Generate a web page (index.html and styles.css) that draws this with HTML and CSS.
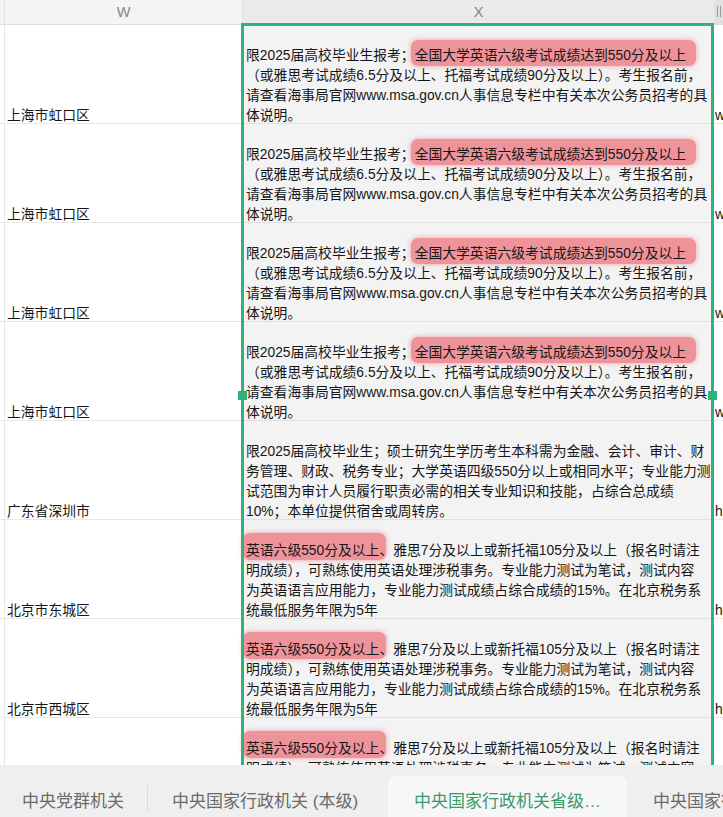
FILE: index.html
```html
<!DOCTYPE html>
<html lang="zh-CN">
<head>
<meta charset="utf-8">
<title>Sheet</title>
<link rel="stylesheet" href="styles.css">
</head>
<body>
<div class="sheet">
  <div class="grid">
    <div class="hd strip"></div>
    <div class="hd w">W</div>
    <div class="hd x">X</div>
    <div class="hd y"><span class="grip"></span></div>

    <div class="c strip"></div>
    <div class="c w"><p class="txt">上海市虹口区</p></div>
    <div class="c x"><p class="txt"><span class="ln">限2025届高校毕业生报考；<mark class="hl">全国大学英语六级考试成绩达到550分及以上</mark></span><span class="ln">（或雅思考试成绩6.5分及以上、托福考试成绩90分及以上）。考生报名前，</span><span class="ln">请查看海事局官网www.msa.gov.cn人事信息专栏中有关本次公务员招考的具</span><span class="ln">体说明。</span></p></div>
    <div class="c y"><p class="txt">www.msa.gov.cn</p></div>

    <div class="c strip"></div>
    <div class="c w"><p class="txt">上海市虹口区</p></div>
    <div class="c x"><p class="txt"><span class="ln">限2025届高校毕业生报考；<mark class="hl">全国大学英语六级考试成绩达到550分及以上</mark></span><span class="ln">（或雅思考试成绩6.5分及以上、托福考试成绩90分及以上）。考生报名前，</span><span class="ln">请查看海事局官网www.msa.gov.cn人事信息专栏中有关本次公务员招考的具</span><span class="ln">体说明。</span></p></div>
    <div class="c y"><p class="txt">www.msa.gov.cn</p></div>

    <div class="c strip"></div>
    <div class="c w"><p class="txt">上海市虹口区</p></div>
    <div class="c x"><p class="txt"><span class="ln">限2025届高校毕业生报考；<mark class="hl">全国大学英语六级考试成绩达到550分及以上</mark></span><span class="ln">（或雅思考试成绩6.5分及以上、托福考试成绩90分及以上）。考生报名前，</span><span class="ln">请查看海事局官网www.msa.gov.cn人事信息专栏中有关本次公务员招考的具</span><span class="ln">体说明。</span></p></div>
    <div class="c y"><p class="txt">www.msa.gov.cn</p></div>

    <div class="c strip"></div>
    <div class="c w"><p class="txt">上海市虹口区</p></div>
    <div class="c x"><p class="txt"><span class="ln">限2025届高校毕业生报考；<mark class="hl">全国大学英语六级考试成绩达到550分及以上</mark></span><span class="ln">（或雅思考试成绩6.5分及以上、托福考试成绩90分及以上）。考生报名前，</span><span class="ln">请查看海事局官网www.msa.gov.cn人事信息专栏中有关本次公务员招考的具</span><span class="ln">体说明。</span></p></div>
    <div class="c y"><p class="txt">www.msa.gov.cn</p></div>

    <div class="c strip"></div>
    <div class="c w"><p class="txt">广东省深圳市</p></div>
    <div class="c x"><p class="txt"><span class="ln">限2025届高校毕业生；硕士研究生学历考生本科需为金融、会计、审计、财</span><span class="ln">务管理、财政、税务专业；大学英语四级550分以上或相同水平；专业能力测</span><span class="ln">试范围为审计人员履行职责必需的相关专业知识和技能，占综合总成绩</span><span class="ln">10%；本单位提供宿舍或周转房。</span></p></div>
    <div class="c y"><p class="txt">http://</p></div>

    <div class="c strip"></div>
    <div class="c w"><p class="txt">北京市东城区</p></div>
    <div class="c x"><p class="txt"><span class="ln"><mark class="hl hl2">英语六级550分及以上</mark>、雅思7分及以上或新托福105分及以上（报名时请注</span><span class="ln">明成绩），可熟练使用英语处理涉税事务。专业能力测试为笔试，测试内容</span><span class="ln">为英语语言应用能力，专业能力测试成绩占综合成绩的15%。在北京税务系</span><span class="ln">统最低服务年限为5年</span></p></div>
    <div class="c y"><p class="txt">http://</p></div>

    <div class="c strip"></div>
    <div class="c w"><p class="txt">北京市西城区</p></div>
    <div class="c x"><p class="txt"><span class="ln"><mark class="hl hl2">英语六级550分及以上</mark>、雅思7分及以上或新托福105分及以上（报名时请注</span><span class="ln">明成绩），可熟练使用英语处理涉税事务。专业能力测试为笔试，测试内容</span><span class="ln">为英语语言应用能力，专业能力测试成绩占综合成绩的15%。在北京税务系</span><span class="ln">统最低服务年限为5年</span></p></div>
    <div class="c y"><p class="txt">http://</p></div>

    <div class="c strip"></div>
    <div class="c w"><p class="txt">北京市西城区</p></div>
    <div class="c x"><p class="txt"><span class="ln"><mark class="hl hl2">英语六级550分及以上</mark>、雅思7分及以上或新托福105分及以上（报名时请注</span><span class="ln">明成绩），可熟练使用英语处理涉税事务。专业能力测试为笔试，测试内容</span><span class="ln">为英语语言应用能力，专业能力测试成绩占综合成绩的15%。在北京税务系</span><span class="ln">统最低服务年限为5年</span></p></div>
    <div class="c y"><p class="txt">http://</p></div>
  </div>

  <div class="sel">
    <span class="handle hl-left"></span>
    <span class="handle hl-right"></span>
  </div>
</div>

<nav class="tabs">
  <div class="tab t1">中央党群机关</div>
  <span class="sep"></span>
  <div class="tab t2">中央国家行政机关 (本级)</div>
  <div class="tab active">中央国家行政机关省级…</div>
  <div class="tab t4">中央国家行政机关市(地)级</div>
</nav>
</body>
</html>
```

FILE: styles.css
```css
* { box-sizing: border-box; }
html, body { margin: 0; padding: 0; }
body {
  width: 723px;
  height: 817px;
  overflow: hidden;
  background: #fff;
  color: #161616;
  font-family: "Liberation Sans", "Noto Sans CJK SC", sans-serif;
  display: flex;
  flex-direction: column;
}

.sheet {
  position: relative;
  height: 765px;
  flex: none;
  overflow: hidden;
}

.grid {
  display: grid;
  grid-template-columns: 5px 238px 471px 1fr;
  grid-template-rows: 25px;
  grid-auto-rows: 99px;
}

.hd {
  height: 25px;
  background: #f4f4f5;
  border-bottom: 1px solid #dcdcdc;
  color: #858585;
  font-size: 14.5px;
  display: flex;
  align-items: center;
  justify-content: center;
  padding-bottom: 1px;
}
.hd.strip { border-right: 1px solid #e0e0e0; }
.hd.w { border-right: 1px solid #e2e2e2; }
.hd.x { background: #e9eaec; }
.hd.y { background: #e0e1e3; justify-content: flex-start; padding-left: 3px; }
.grip {
  width: 4px;
  height: 11px;
  border-left: 1px solid #9a9a9a;
  border-right: 1px solid #9a9a9a;
}

.c {
  border-bottom: 1px solid #e8e8e8;
  display: flex;
  align-items: flex-end;
  font-size: 13.8px;
  line-height: 20px;
  white-space: nowrap;
  min-width: 0;
}
.c.strip { border-right: 1px solid #e6e6e6; }
.c.w { padding-left: 2px; }
.c.x {
  background: #f3f3f3;
  border-bottom-color: #e0e0e0;
  padding-left: 3px;
}
.c.y { padding-left: 1px; }

.txt {
  margin: 0 0 -3px;
}
.ln { display: block; }

.hl {
  color: inherit;
  background: rgba(236, 84, 96, 0.6);
  border-radius: 7px;
  padding: 8px 10px 3px 4px;
  margin: 0 -10px 0 -4px;
  box-shadow: 0 0 4px 1px rgba(236, 84, 96, 0.38);
}
.hl2 {
  padding: 10px 7px 2px 3px;
  margin: 0 -7px 0 -3px;
}

.sel {
  position: absolute;
  left: 241px;
  top: 23px;
  width: 473px;
  height: 800px;
  border: 3px solid #2fb27b;
  pointer-events: none;
}
.handle {
  position: absolute;
  top: 365px;
  width: 9px;
  height: 9px;
  background: #2fb27b;
}
.hl-left { left: -6px; }
.hl-right { right: -6px; }

.tabs {
  height: 52px;
  flex: none;
  background: #efefef;
  display: flex;
  align-items: flex-end;
  font-size: 17px;
  color: #6a6a6a;
  white-space: nowrap;
  overflow: hidden;
}
.tab {
  height: 41px;
  display: flex;
  align-items: center;
  padding-top: 5px;
  flex: none;
}
.t1 { padding-left: 22px; padding-right: 23px; }
.sep {
  width: 1px;
  height: 26px;
  background: #dadada;
  margin-bottom: 6px;
  flex: none;
}
.t2 { padding-left: 24px; padding-right: 30px; }
.tab.active {
  background: #f7f7f7;
  border-radius: 8px 8px 0 0;
  color: #3a9a6b;
  padding-left: 26px;
  padding-right: 26px;
}
.t4 { padding-left: 26px; }
```
